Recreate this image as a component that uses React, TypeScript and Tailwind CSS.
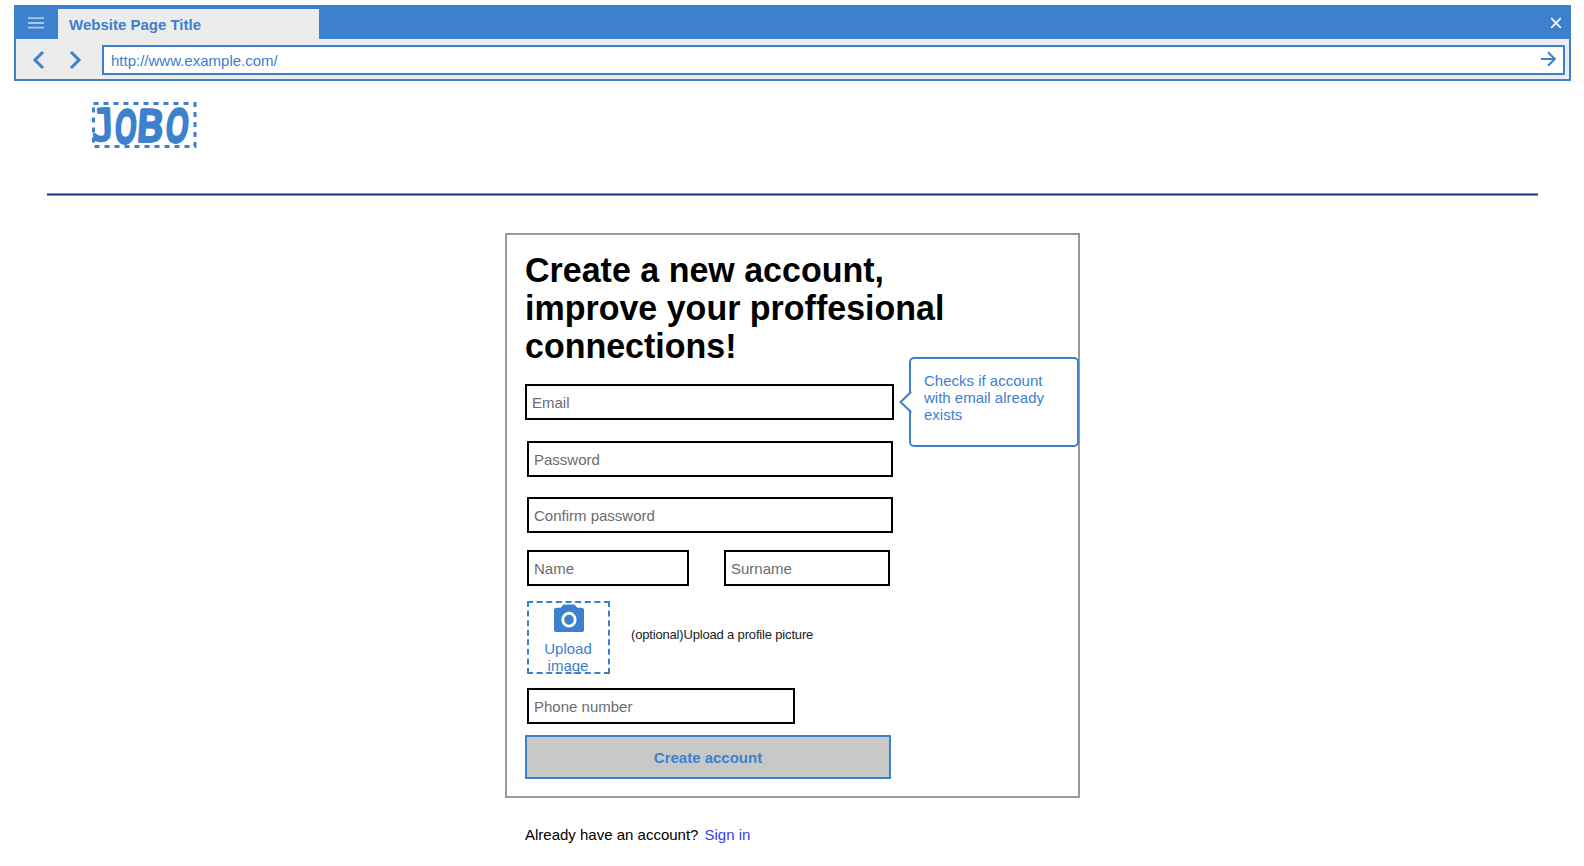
import React from "react";

function Field({ label, className }: { label: string; className: string }) {
  return (
    <input
      type="text"
      aria-label={label}
      placeholder={label}
      className={`block h-9 rounded-none border-2 border-black bg-white px-[5px] text-[15px] text-black outline-none placeholder:text-[#6b6b6b] placeholder:opacity-100 ${className}`}
    />
  );
}

function BrowserBar() {
  return (
    <header className="ml-[14px] mt-[5px] h-[76px] w-[1557px] border-2 border-[#3d80cd] bg-[#ececec] text-[#3d80cd]">
      <div className="flex h-8 items-start bg-[#3d80cd]">
        <button aria-label="Menu" className="flex h-8 w-[42px] items-center pl-[11px]">
          <svg width="18" height="14" viewBox="0 0 18 14" className="text-[#a9c8ea]" stroke="currentColor" strokeWidth="1.8">
            <path d="M1 2.1h16M1 7h16M1 11.700h16" />
          </svg>
        </button>
        <div className="mt-0.5 flex h-[30px] w-[261px] items-center bg-[#ececec] pl-[11px] pt-[2px] text-[15px] font-bold">
          Website Page Title
        </div>
        <button aria-label="Close" className="ml-auto mr-[7px] mt-[10px]">
          <svg width="12" height="12" viewBox="0 0 12 12" stroke="white" strokeWidth="1.7">
            <path d="M1.2 1.2l9.6 9.6M10.8 1.2l-9.6 9.6" />
          </svg>
        </button>
      </div>
      <div className="flex h-10 items-center">
        <svg width="86" height="40" viewBox="0 0 86 40" fill="none" stroke="currentColor" strokeWidth="3">
          <path d="M27 13l-8 8 8 8M55 13l8 8-8 8" />
        </svg>
        <div className="mt-[2px] flex h-[30px] w-[1463px] items-center border-2 border-[#3d80cd] bg-white pl-[7px] pr-[7px] text-[15px]">
          <span className="pt-[2px]">http://www.example.com/</span>
          <svg className="mb-[2px] ml-auto" width="16" height="16" viewBox="0 0 16 16" fill="none" stroke="currentColor" strokeWidth="2">
            <path d="M1 8h14M8 1.2L14.800 8 8 14.8" />
          </svg>
        </div>
      </div>
    </header>
  );
}

function Logo() {
  return (
    <svg
      className="ml-[92px] mt-[21px] block overflow-visible"
      width="105"
      height="47"
      viewBox="0 0 105 47"
      role="img"
      aria-label="JOBO"
    >
      <rect x="1.5" y="1.5" width="101.5" height="43" fill="none" stroke="#3d80cd" strokeWidth="3" strokeDasharray="5 5" />
      <g
        fill="#3d80cd"
        stroke="#3d80cd"
        strokeWidth="4"
        strokeLinejoin="round"
        strokeLinecap="round"
        fontFamily="'Open Sans', sans-serif"
        fontWeight="400"
        fontSize="43"
      >
        <text
          transform="translate(0.5 38.5) rotate(-2) scale(.86 1)"
          fontFamily="'DejaVu Sans Mono', monospace"
          fontSize="43"
          strokeWidth="3"
        >
          J
        </text>
        <text transform="translate(22.5 39.5) skewX(-4) scale(.62 1)" strokeWidth="5">O</text>
        <text transform="translate(44 39) skewX(-4) scale(.93 1)" strokeWidth="4">B</text>
        <text transform="translate(73 39) skewX(-6) scale(.65 1)" strokeWidth="5">O</text>
      </g>
    </svg>
  );
}

function Tooltip() {
  return (
    <div className="absolute left-[402px] top-[122px] h-[90px] w-[170px] rounded-[5px] border-2 border-[#3d80cd] bg-white pl-[13px] pt-[13px] text-[15px] leading-[17px] text-[#3d80cd]">
      Checks if account
      <br />
      with email already
      <br />
      exists
      <svg className="absolute -left-[12px] top-[31px]" width="14" height="24" viewBox="0 0 14 24">
        <path d="M12.5 2L1.5 12l11 10" fill="#fff" />
        <path d="M13 2v20" stroke="#fff" strokeWidth="2.5" />
        <path d="M11.5 1.5v1L1.5 12l10 9.5v1" fill="none" stroke="#3d80cd" strokeWidth="2" />
      </svg>
    </div>
  );
}

function UploadBox() {
  return (
    <button className="flex h-[73px] w-[83px] flex-col items-center border-2 border-dashed border-[#3d80cd] pr-px text-[15px] leading-[17px] text-[#3d80cd]">
      <svg className="ml-px mt-px block h-[29px] w-[32px] shrink-0" viewBox="0 0 32 28" preserveAspectRatio="none">
        <path
          d="M10.5 0.500h11l2.8 3H28.500a2.500 2.500 0 0 1 2.500 2.500v18.500a2.500 2.500 0 0 1-2.500 2.500h-25A2.500 2.500 0 0 1 1 24.500v-18.500A2.500 2.500 0 0 1 3.500 3.500h4.200z"
          fill="#3d80cd"
        />
        <circle cx="16" cy="15.200" r="6.200" fill="none" stroke="#fff" strokeWidth="2.800" />
      </svg>
      <span className="mt-[7px] block">
        Upload
        <br />
        image
      </span>
    </button>
  );
}

export default function App() {
  return (
    <div className="flow-root h-[866px] w-[1584px] overflow-hidden bg-white font-['Liberation_Sans',Arial,sans-serif]">
      <BrowserBar />
      <Logo />
      <div className="ml-[47px] mt-[44px] h-[3px] w-[1491px] border-y border-[#8592b8] bg-[#1c3587]" />

      <main className="relative ml-[505px] mt-[37px] h-[565px] w-[575px] border-2 border-[#999] pl-[18px] pt-4">
        <h1 className="h-[133px] origin-top scale-y-[1.027] text-[34px] font-bold leading-[37px] text-black">
          Create a new account,
          <br />
          improve your proffesional
          <br />
          connections!
        </h1>
        <Field label="Email" className="w-[369px]" />
        <Field label="Password" className="ml-0.5 mt-[21px] w-[366px]" />
        <Field label="Confirm password" className="ml-0.5 mt-5 w-[366px]" />
        <div className="ml-0.5 mt-[17px] flex gap-[35px]">
          <Field label="Name" className="w-[162px]" />
          <Field label="Surname" className="w-[166px]" />
        </div>
        <div className="ml-0.5 mt-[15px] flex items-center">
          <UploadBox />
          <p className="mb-[6px] ml-[21px] text-[13px] tracking-[-0.17px] text-[#1a1a1a]">(optional)Upload a profile picture</p>
        </div>
        <Field label="Phone number" className="ml-0.5 mt-[14px] w-[268px]" />
        <button className="mt-[11px] flex h-11 w-[366px] items-center justify-center border-2 border-[#3d80cd] bg-[#c8c8c8] pt-[2px] text-[15px] font-bold text-[#3d80cd]">
          Create account
        </button>
        <Tooltip />
      </main>

      <p className="ml-[525px] mt-[28px] flex gap-[6px] text-[15px] leading-[17px] text-black">
        Already have an account?
        <a href="#" className="text-[#3a3af0]">Sign in</a>
      </p>
    </div>
  );
}
